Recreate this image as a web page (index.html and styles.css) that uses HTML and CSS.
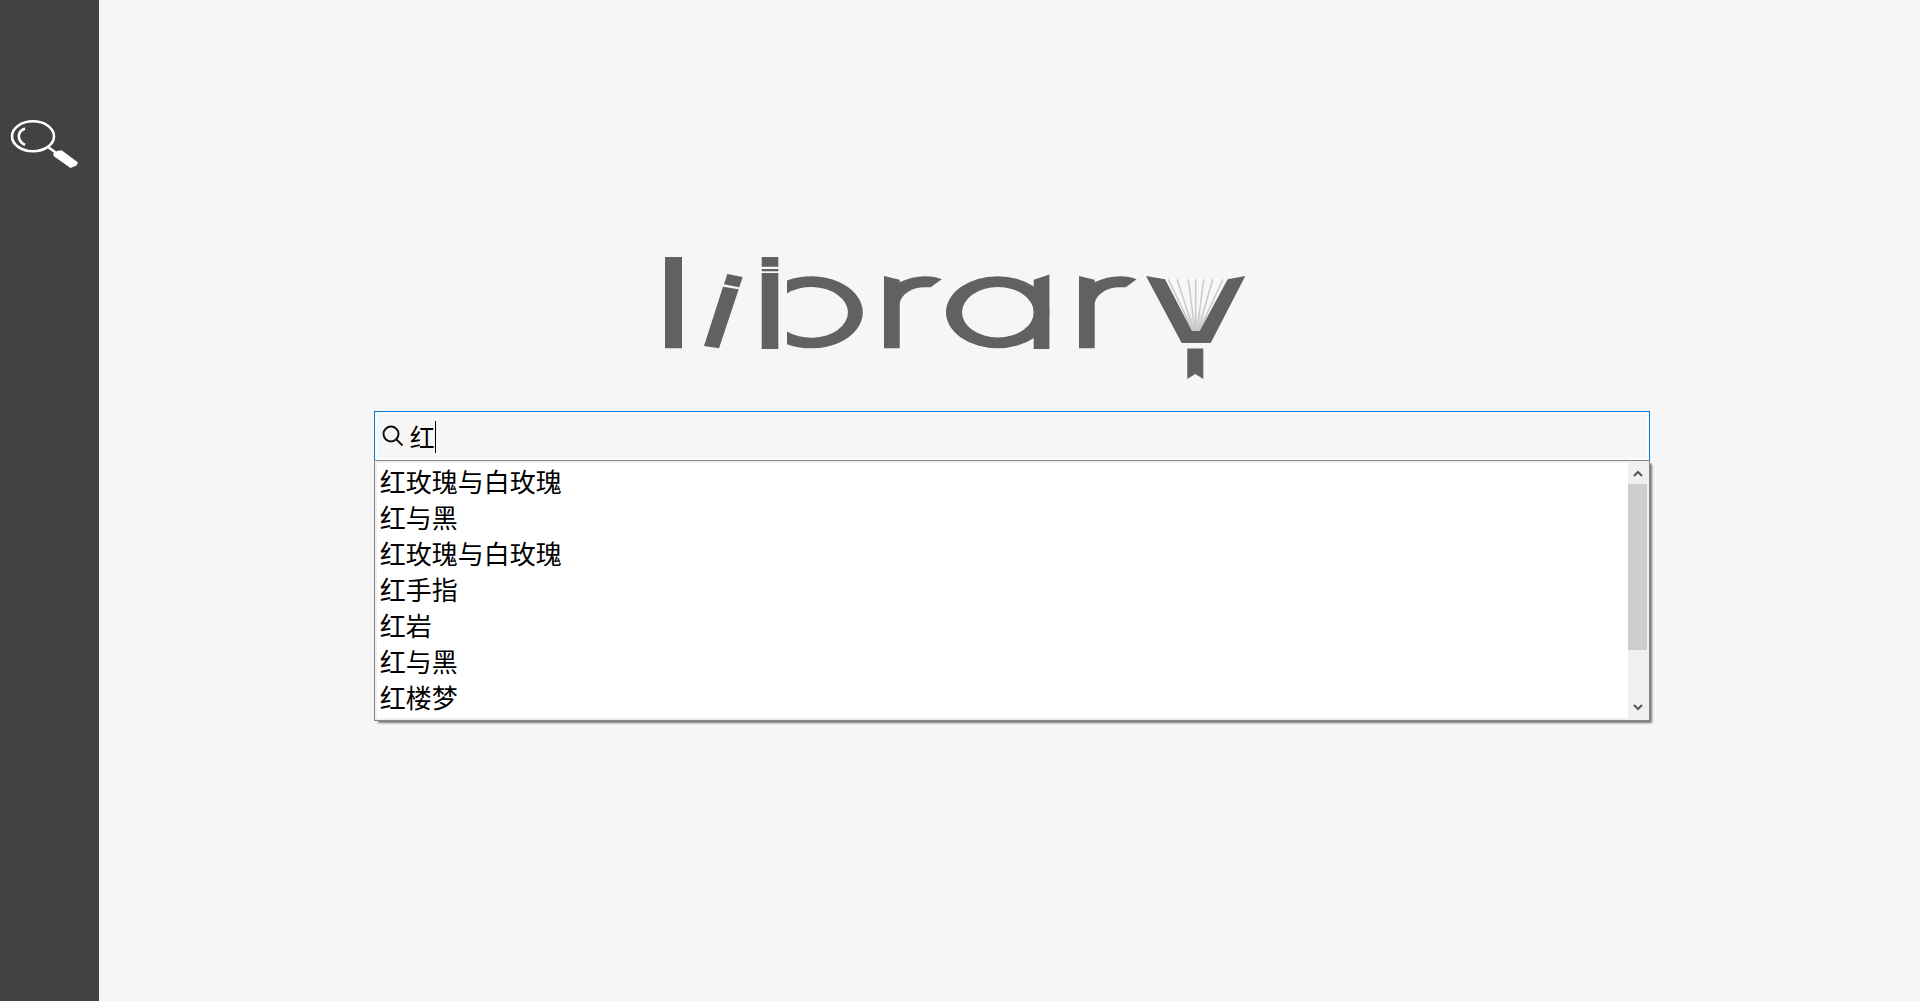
FILE: index.html
```html
<!DOCTYPE html>
<html lang="zh-CN">
<head>
<meta charset="utf-8">
<title>Library</title>
<link rel="stylesheet" href="styles.css">
</head>
<body>
<div class="app">
  <nav class="sidebar">
    <a class="nav-link" href="#search" aria-label="Search">
      <svg width="72" height="52" viewBox="8 118 72 52" fill="none" stroke="#fff" stroke-width="2.6">
        <ellipse cx="33" cy="136.3" rx="21" ry="15"/>
        <path d="M25 128.5C17 131.500 16.500 140.500 25 145" stroke-width="2.6"/>
        <path d="M48 147L57 153.500"/>
        <path d="M53.500 153L58.500 150.500H62L78 162.500L76.500 165.500L70.500 168L53.500 156Z" fill="#fff" stroke="none"/>
      </svg>
    </a>
  </nav>
  <main class="main">
    <div class="search-area">
      <svg class="logo" width="590" height="130" viewBox="660 252 590 130" fill="#626061" role="img" aria-label="library">
        <defs>
          <linearGradient id="pages" x1="0" y1="0" x2="0" y2="1">
            <stop offset="0.6" stop-color="#f8f8f8"/>
            <stop offset="1" stop-color="#d2d2d2"/>
          </linearGradient>
        </defs>
        <path d="M665 257H682V348.300H665Z"/>
        <path d="M727.300 274L742.700 277L739.300 287.300L724 284.300ZM723 286.700L738.700 289.300L719 348.300L704 346Z"/>
        <path d="M761.700 257H778.300V266.700H761.700ZM761.700 269H778.300V271.200H761.700ZM761.700 273H778.300V349H761.700Z"/>
        <path d="M787 280.500A51.700 36 0 1 1 787 344.200V331.400A36.700 25.300 0 1 0 787 293.400Z"/>
        <path id="letter-r" d="M884 276L899.700 279.700V282.300Q912 276.300 925 276.300Q935 276.300 941.700 279.300L930.700 287.300H925C911 287.300 901 295 899.700 303.300V348.300H884Z"/>
        <path fill-rule="evenodd" d="M946 312.300a51.700 36 0 1 1 103.400 0a51.700 36 0 1 1 -103.400 0ZM962 312.300a35.900 25.200 0 1 0 71.800 0a35.900 25.200 0 1 0 -71.800 0Z"/>
        <path d="M1033.700 279.700L1049.400 274.500V349H1033.700Z"/>
        <use href="#letter-r" x="195"/>
        <path d="M1166 279.300H1227L1200 331H1192Z" fill="url(#pages)"/>
        <path d="M1168.300 279.300L1193 331M1177 279.300L1194 331M1188.300 279.300L1195 331M1195.700 279.300V331M1203.700 279.300L1197 331M1212.700 279.300L1198 331M1223 279.300L1199 331" stroke="#c9c9c9" stroke-width="1.5"/>
        <path d="M1146 276L1165 279.300L1192 331H1199.700L1227.700 279.300L1245.300 276L1210.700 343H1181.700Z"/>
        <path d="M1187.300 348.500H1203.300V379L1195.300 374L1187.300 379Z"/>
      </svg>
      <div class="search-box">
        <svg class="search-icon" width="22" height="22" viewBox="0 0 22 22" fill="none" stroke="#111" stroke-width="2">
          <circle cx="9" cy="9" r="7.500"/>
          <path d="M14 14L20.500 20.500"/>
        </svg>
        <input class="search-input" type="text" value="红" aria-label="搜索图书">
        <span class="caret"></span>
      </div>
      <div class="dropdown">
        <ul class="options" role="listbox" aria-label="搜索建议">
          <li class="option" role="option">红玫瑰与白玫瑰</li>
          <li class="option" role="option">红与黑</li>
          <li class="option" role="option">红玫瑰与白玫瑰</li>
          <li class="option" role="option">红手指</li>
          <li class="option" role="option">红岩</li>
          <li class="option" role="option">红与黑</li>
          <li class="option" role="option">红楼梦</li>
        </ul>
        <div class="scrollbar">
          <button class="scroll-button" type="button" aria-label="向上滚动">
            <svg width="10" height="7" viewBox="0 0 10 7" fill="none" stroke="#555" stroke-width="2"><path d="M1 6L5 2L9 6"/></svg>
          </button>
          <div class="track"><div class="thumb"></div></div>
          <button class="scroll-button" type="button" aria-label="向下滚动">
            <svg width="10" height="7" viewBox="0 0 10 7" fill="none" stroke="#555" stroke-width="2"><path d="M1 1L5 5L9 1"/></svg>
          </button>
        </div>
      </div>
    </div>
  </main>
</div>
</body>
</html>
```
FILE: styles.css
```css
* {
  box-sizing: border-box;
}

body {
  margin: 0;
  background: #f6f6f6;
  color: #000;
  font-family: "Noto Sans CJK SC", sans-serif;
}

.app {
  display: flex;
  min-height: 100vh;
}

.sidebar {
  flex: none;
  width: 99px;
  padding: 118px 0 0 8px;
  background: #414243;
}

.nav-link {
  display: block;
}

.nav-link svg {
  display: block;
}

.main {
  flex: 1;
  display: flex;
  justify-content: center;
  align-items: flex-start;
  padding: 252px 0 0 5px;
}

.search-area {
  width: 70.3%;
}

.logo {
  display: block;
  margin: 0 0 29px 286px;
}

.search-box {
  position: relative;
  display: flex;
  align-items: center;
  gap: 6px;
  height: 49px;
  padding-left: 7px;
  border: 1px solid #0078d7;
  border-bottom: 0;
  box-shadow: inset 0 0 0 2px #fcfcfc;
}

.search-icon {
  flex: none;
}

.search-input {
  flex: 1;
  min-width: 0;
  height: 36px;
  padding: 0;
  border: 0;
  outline: 0;
  background: transparent;
  color: #000;
  font: 25px/36px "Noto Sans CJK SC", sans-serif;
}

/* Text cursor, shown after the typed character */
.caret {
  position: absolute;
  top: 9px;
  left: 60px;
  width: 1px;
  height: 32px;
  background: #000;
}

.dropdown {
  display: flex;
  height: 261px;
  padding: 2px;
  padding-right: 0;
  border: 1px solid #828790;
  background: #fff;
  box-shadow: inset 0 0 0 2px #f0f0f0, 3px 3px 2px -1px #777;
}

.options {
  flex: 1;
  margin: 0;
  padding: 0 3px;
  list-style: none;
}

.option {
  font-size: 26px;
  line-height: 36px;
}

.scrollbar {
  display: flex;
  flex-direction: column;
  width: 21px;
  padding-right: 2px;
  background: #f0f0f0;
}

.scroll-button {
  display: flex;
  align-items: center;
  justify-content: center;
  height: 21px;
  padding: 0;
  border: 0;
  background: transparent;
}

.track {
  flex: 1;
}

.thumb {
  height: 78%;
  background: #cdcdcd;
}
```
